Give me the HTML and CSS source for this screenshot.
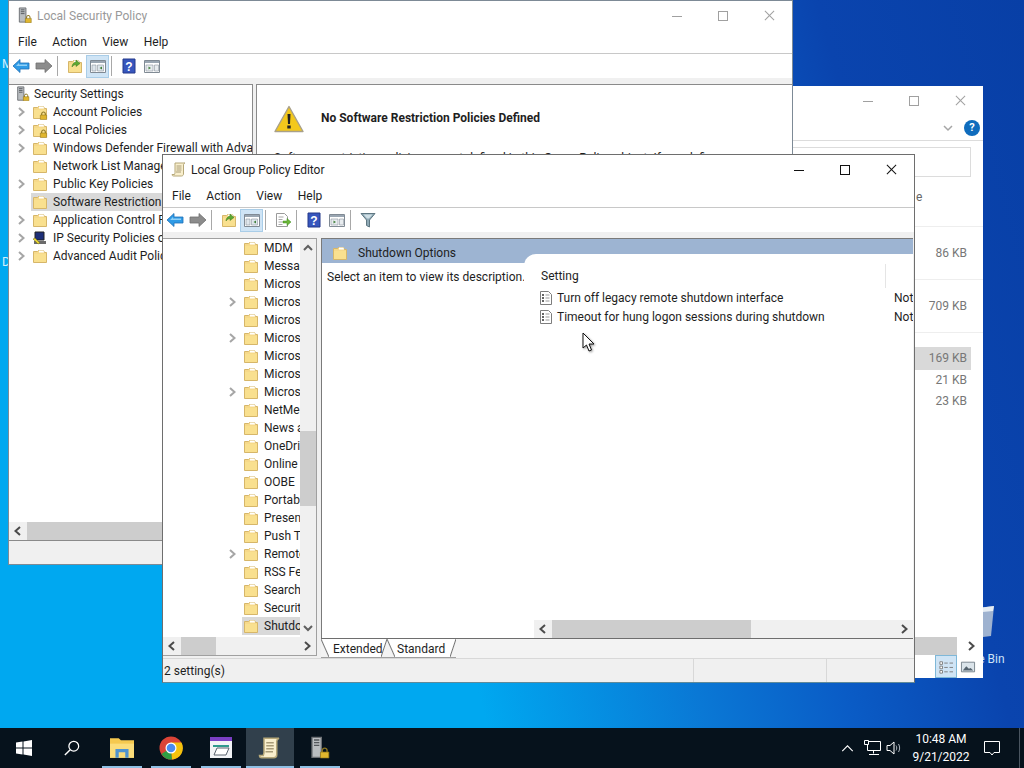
FILE: index.html
```html
<!DOCTYPE html>
<html lang="en">
  <head>
    <meta charset="UTF-8" />
    <title>Local Group Policy Editor</title>
    <link rel="stylesheet" href="styles.css">
  </head>
  <body>
    <svg class="sprites" aria-hidden="true">
      <symbol id="folder" viewBox="0 0 16 16">
        <path d="M1.500 3.500h4l1-1h5l1 2h2v10h-13z" fill="#f6d98a" stroke="#d6b669"/>
        <path d="M7 2.500h4.500l.5 2H7z" fill="#fff"/>
        <path d="M2 6h12v8H2z" fill="#f9e08f"/>
      </symbol>
      <symbol id="lock" viewBox="0 0 10 10">
        <path d="M3 5V3.200a2 2 0 0 1 4 0V5" fill="none" stroke="#8a7420" stroke-width="1.200"/>
        <path d="M1.500 4.500h7v5h-7z" fill="#e0b62e" stroke="#8f7418" stroke-width=".6"/>
      </symbol>
      <symbol id="chev" viewBox="0 0 12 12">
        <path d="M4 2l4.500 4L4 10" fill="none" stroke="#a6a6a6" stroke-width="2"/>
      </symbol>
      <symbol id="server" viewBox="0 0 16 18">
        <path d="M2 1h7v15H2z" fill="#b9bdc0" stroke="#6c7074"/>
        <path d="M3.500 3h4M3.500 5h4M3.500 7h4" stroke="#54585c"/>
        <use href="#lock" x="7" y="8" width="9" height="9"/>
      </symbol>
      <symbol id="back" viewBox="0 0 18 16">
        <path d="M1 8l7-6.500V5h9v6H8v3.500z" fill="#2f9be6" stroke="#1f6fb5" stroke-width=".8"/>
        <path d="M4 8l3-3v1.500h8V8z" fill="#8fd0f7"/>
      </symbol>
      <symbol id="fwd" viewBox="0 0 18 16">
        <path d="M17 8l-7-6.500V5H1v6h9v3.500z" fill="#8c8c8c" stroke="#6e6e6e" stroke-width=".8"/>
      </symbol>
      <symbol id="up" viewBox="0 0 16 16">
        <use href="#folder" width="16" height="16"/>
        <path d="M5 9c0-3 2-4.500 4-5V2l4 3.500-4 3V6.500c-1.500.3-3 1-4 2.500z" fill="#5ea832" stroke="#3c7a1c" stroke-width=".5"/>
      </symbol>
      <symbol id="pane-l" viewBox="0 0 18 16">
        <path d="M1.500 2.500h15v12h-15z" fill="#fff" stroke="#808a94"/>
        <path d="M2 3h14v2H2z" fill="#9aa6b2"/>
        <path d="M3 7h4v6H3zM8.500 7h6v6h-6z" fill="#dfe6ec" stroke="#8b959e" stroke-width=".6"/>
        <path d="M13 8.500v3l-2.500-1.500z" fill="#3f7f3a"/>
      </symbol>
      <symbol id="pane-r" viewBox="0 0 18 16">
        <path d="M1.500 2.500h15v12h-15z" fill="#fff" stroke="#808a94"/>
        <path d="M2 3h14v2H2z" fill="#9aa6b2"/>
        <path d="M3 7h7v6H3zM11.500 7h4v6h-4z" fill="#e8ecef" stroke="#8b959e" stroke-width=".6"/>
        <path d="M5.500 8.500v3l2.500-1.500z" fill="#3f7f3a"/>
      </symbol>
      <symbol id="help" viewBox="0 0 14 16">
        <path d="M1 1h12v14H1z" fill="#3756bd" stroke="#25398a"/>
        <text x="7" y="12.500" text-anchor="middle" font-family="Liberation Sans" font-weight="700" font-size="12" fill="#fff">?</text>
      </symbol>
      <symbol id="export" viewBox="0 0 18 16">
        <path d="M2.500 1.500h8l3 3v10h-11z" fill="#fff" stroke="#9a9a9a"/>
        <path d="M4.500 5h5M4.500 7.500h4M4.500 10h4M4.500 12.500h4" stroke="#a8a8a8"/>
        <path d="M9 9h4V6.500l4 3.500-4 3.500V11H9z" fill="#6cb63a" stroke="#3f8a1f" stroke-width=".5"/>
      </symbol>
      <symbol id="funnel" viewBox="0 0 16 16">
        <path d="M1 1.500h14L9.500 8v7l-3-1.500V8z" fill="#8fa9b5" stroke="#5f7782"/>
        <path d="M3.500 2.500h9L9 6.500H7z" fill="#cfdfe6"/>
      </symbol>
      <symbol id="script" viewBox="0 0 16 16">
        <path d="M4 1.500h10c-1 .5-1.500 1-1.500 2v9c0 1-.8 2-2 2H2.500c-1 0-1.500-.7-1.500-1.500h2.500c.3-1 .5-1.500.5-2z" fill="#f9efcd" stroke="#b5a778"/>
        <path d="M5.500 4.500h5M5.500 6.500h5M5.500 8.500h5M5 10.500h5" stroke="#a89c78"/>
      </symbol>
      <symbol id="policy" viewBox="0 0 14 16">
        <path d="M1.500 1.500h8l3 3v10h-11z" fill="#fff" stroke="#7d7d7d"/>
        <path d="M3 5h2M3 8h2M3 11h2" stroke="#333" stroke-width="1.400"/>
        <path d="M6.500 5h4M6.500 8h4M6.500 11h4" stroke="#9a9a9a"/>
      </symbol>
    </svg>

    <main class="desktop">
      <span class="desk-label desk-label--m">M</span>
      <span class="desk-label desk-label--d">D</span>
      <div class="recycle">
        <svg class="recycle__bin" viewBox="0 0 30 36">
          <path d="M3 5l24-3-3 30-16 2z" fill="#b9c6d6" opacity=".85"/>
          <path d="M3 5l24-3-1 5-21 2z" fill="#e6edf4"/>
        </svg>
        <span class="recycle__name">Recycle Bin</span>
      </div>

      <!-- file explorer, only its right side shows -->
      <section class="win win--files">
        <div class="files-title">
          <span class="caption caption--min caption--off"></span>
          <span class="caption caption--max caption--off"></span>
          <span class="caption caption--close caption--off"></span>
        </div>
        <div class="files-ribbon">
          <svg class="files-ribbon__chev" viewBox="0 0 12 12"><path d="M2 4l4 4 4-4" fill="none" stroke="#a6a6a6" stroke-width="1.500"/></svg>
          <span class="files-help">?</span>
        </div>
        <div class="files-search"></div>
        <div class="files-head">e</div>
        <div class="file-row file-row--tall">86 KB</div>
        <div class="file-row file-row--tall">709 KB</div>
        <div class="file-row file-row--tall file-row--last">
          <span class="file-row__size file-row__size--sel">169 KB</span>
        </div>
        <div class="file-row file-row--small">21 KB</div>
        <div class="file-row file-row--small">23 KB</div>
        <div class="files-spacer"></div>
        <div class="sb-h sb-h--files">
          <span class="sb-h__track sb-h__track--files"></span>
          <svg class="sb-arrow sb-arrow--dark" viewBox="0 0 12 12"><use href="#chev"/></svg>
        </div>
        <div class="files-status">
          <span class="view-btn view-btn--on">
            <svg viewBox="0 0 18 16"><path d="M2 2h3v3H2zM2 7h3v3H2zM2 12h3v3H2z" fill="#fff" stroke="#777"/><path d="M7 3.500h4M13 3.500h4M7 8.500h4M13 8.500h4M7 13.500h4M13 13.500h4" stroke="#777"/></svg>
          </span>
          <span class="view-btn">
            <svg viewBox="0 0 18 16"><path d="M1.500 2.500h15v11h-15z" fill="#dbe4ea" stroke="#6f7b85"/><path d="M3 12l4-5 3 3 2-1 3 3z" fill="#55636e"/></svg>
          </span>
        </div>
      </section>

      <!-- local security policy, behind the editor -->
      <section class="win win--lsp">
        <header class="titlebar titlebar--off">
          <svg class="titlebar__icon" viewBox="0 0 16 18"><use href="#server"/></svg>
          <span class="titlebar__text">Local Security Policy</span>
          <span class="caption caption--min caption--off"></span>
          <span class="caption caption--max caption--off"></span>
          <span class="caption caption--close caption--off"></span>
        </header>
        <nav class="menubar">
          <span>File</span><span>Action</span><span>View</span><span>Help</span>
        </nav>
        <div class="toolbar">
          <span class="tb-btn"><svg viewBox="0 0 18 16"><use href="#back"/></svg></span>
          <span class="tb-btn"><svg viewBox="0 0 18 16"><use href="#fwd"/></svg></span>
          <span class="tb-sep"></span>
          <span class="tb-btn"><svg viewBox="0 0 16 16"><use href="#up"/></svg></span>
          <span class="tb-btn tb-btn--on"><svg viewBox="0 0 18 16"><use href="#pane-l"/></svg></span>
          <span class="tb-sep"></span>
          <span class="tb-btn"><svg viewBox="0 0 14 16"><use href="#help"/></svg></span>
          <span class="tb-btn"><svg viewBox="0 0 18 16"><use href="#pane-r"/></svg></span>
        </div>
        <div class="lsp-body">
          <div class="lsp-tree">
            <div class="lsp-tree__list">
              <div class="tree-root">
                <svg class="tree-icon" viewBox="0 0 16 18"><use href="#server"/></svg>
                <span>Security Settings</span>
              </div>
              <div class="tree-row"><svg class="tree-arrow" viewBox="0 0 12 12"><use href="#chev"/></svg><div class="tree-item"><svg class="tree-icon" viewBox="0 0 16 16"><use href="#folder"/><use href="#lock" x="7" y="7" width="9" height="9"/></svg><span class="tree-label">Account Policies</span></div></div>
              <div class="tree-row"><svg class="tree-arrow" viewBox="0 0 12 12"><use href="#chev"/></svg><div class="tree-item"><svg class="tree-icon" viewBox="0 0 16 16"><use href="#folder"/><use href="#lock" x="7" y="7" width="9" height="9"/></svg><span class="tree-label">Local Policies</span></div></div>
              <div class="tree-row"><svg class="tree-arrow" viewBox="0 0 12 12"><use href="#chev"/></svg><div class="tree-item"><svg class="tree-icon" viewBox="0 0 16 16"><use href="#folder"/></svg><span class="tree-label">Windows Defender Firewall with Advanced Security</span></div></div>
              <div class="tree-row"><span class="tree-arrow"></span><div class="tree-item"><svg class="tree-icon" viewBox="0 0 16 16"><use href="#folder"/></svg><span class="tree-label">Network List Manager Policies</span></div></div>
              <div class="tree-row"><svg class="tree-arrow" viewBox="0 0 12 12"><use href="#chev"/></svg><div class="tree-item"><svg class="tree-icon" viewBox="0 0 16 16"><use href="#folder"/></svg><span class="tree-label">Public Key Policies</span></div></div>
              <div class="tree-row"><span class="tree-arrow"></span><div class="tree-item tree-item--sel"><svg class="tree-icon" viewBox="0 0 16 16"><use href="#folder"/></svg><span class="tree-label">Software Restriction Policies</span></div></div>
              <div class="tree-row"><svg class="tree-arrow" viewBox="0 0 12 12"><use href="#chev"/></svg><div class="tree-item"><svg class="tree-icon" viewBox="0 0 16 16"><use href="#folder"/></svg><span class="tree-label">Application Control Policies</span></div></div>
              <div class="tree-row"><svg class="tree-arrow" viewBox="0 0 12 12"><use href="#chev"/></svg><div class="tree-item"><svg class="tree-icon" viewBox="0 0 16 16"><path d="M3 2h9v8H3z" fill="#1e2f78" stroke="#222"/><path d="M2 11h12v3H2z" fill="#6b6b6b"/><path d="M1 9l5 5 2-1-5-5z" fill="#e8d335" stroke="#6a6a20" stroke-width=".5"/></svg><span class="tree-label">IP Security Policies on Local Computer</span></div></div>
              <div class="tree-row"><svg class="tree-arrow" viewBox="0 0 12 12"><use href="#chev"/></svg><div class="tree-item"><svg class="tree-icon" viewBox="0 0 16 16"><use href="#folder"/></svg><span class="tree-label">Advanced Audit Policy Configuration</span></div></div>
            </div>
            <div class="sb-h">
              <svg class="sb-arrow sb-arrow--left sb-arrow--dark" viewBox="0 0 12 12"><use href="#chev"/></svg>
              <span class="sb-h__track sb-h__track--lsp"></span>
            </div>
          </div>
          <div class="lsp-detail">
            <div class="lsp-notice">
              <svg class="lsp-notice__icon" viewBox="0 0 30 28">
                <path d="M15 1.500l14 25H1z" fill="#f3c81c" stroke="#a8a08a" stroke-width="1.400" stroke-linejoin="round"/>
                <path d="M13.500 9h3l-.5 10h-2z" fill="#222"/><path d="M13.300 20.500h3.400v3h-3.400z" fill="#222"/>
              </svg>
              <strong class="lsp-notice__title">No Software Restriction Policies Defined</strong>
            </div>
            <p class="lsp-text">Software restriction policies are not defined in this Group Policy object. If you define</p>
          </div>
        </div>
        <footer class="lsp-status"></footer>
      </section>

      <!-- local group policy editor, the active window -->
      <section class="win win--gpe">
        <header class="titlebar">
          <svg class="titlebar__icon" viewBox="0 0 16 16"><use href="#script"/></svg>
          <span class="titlebar__text">Local Group Policy Editor</span>
          <span class="caption caption--min"></span>
          <span class="caption caption--max"></span>
          <span class="caption caption--close"></span>
        </header>
        <nav class="menubar">
          <span>File</span><span>Action</span><span>View</span><span>Help</span>
        </nav>
        <div class="toolbar">
          <span class="tb-btn"><svg viewBox="0 0 18 16"><use href="#back"/></svg></span>
          <span class="tb-btn"><svg viewBox="0 0 18 16"><use href="#fwd"/></svg></span>
          <span class="tb-sep"></span>
          <span class="tb-btn"><svg viewBox="0 0 16 16"><use href="#up"/></svg></span>
          <span class="tb-btn tb-btn--on"><svg viewBox="0 0 18 16"><use href="#pane-l"/></svg></span>
          <span class="tb-sep"></span>
          <span class="tb-btn"><svg viewBox="0 0 18 16"><use href="#export"/></svg></span>
          <span class="tb-sep"></span>
          <span class="tb-btn"><svg viewBox="0 0 14 16"><use href="#help"/></svg></span>
          <span class="tb-btn"><svg viewBox="0 0 18 16"><use href="#pane-r"/></svg></span>
          <span class="tb-sep"></span>
          <span class="tb-btn"><svg viewBox="0 0 16 16"><use href="#funnel"/></svg></span>
        </div>
        <div class="gpe-body">
          <div class="gpe-tree">
            <div class="gpe-tree__list">
              <div class="tree-row tree-row--deep"><span class="tree-arrow"></span><div class="tree-item"><svg class="tree-icon" viewBox="0 0 16 16"><use href="#folder"/></svg><span class="tree-label">MDM</span></div></div>
              <div class="tree-row tree-row--deep"><span class="tree-arrow"></span><div class="tree-item"><svg class="tree-icon" viewBox="0 0 16 16"><use href="#folder"/></svg><span class="tree-label">Messaging</span></div></div>
              <div class="tree-row tree-row--deep"><span class="tree-arrow"></span><div class="tree-item"><svg class="tree-icon" viewBox="0 0 16 16"><use href="#folder"/></svg><span class="tree-label">Microsoft account</span></div></div>
              <div class="tree-row tree-row--deep"><svg class="tree-arrow" viewBox="0 0 12 12"><use href="#chev"/></svg><div class="tree-item"><svg class="tree-icon" viewBox="0 0 16 16"><use href="#folder"/></svg><span class="tree-label">Microsoft Defender Antivirus</span></div></div>
              <div class="tree-row tree-row--deep"><span class="tree-arrow"></span><div class="tree-item"><svg class="tree-icon" viewBox="0 0 16 16"><use href="#folder"/></svg><span class="tree-label">Microsoft Defender Application Guard</span></div></div>
              <div class="tree-row tree-row--deep"><svg class="tree-arrow" viewBox="0 0 12 12"><use href="#chev"/></svg><div class="tree-item"><svg class="tree-icon" viewBox="0 0 16 16"><use href="#folder"/></svg><span class="tree-label">Microsoft Defender Exploit Guard</span></div></div>
              <div class="tree-row tree-row--deep"><span class="tree-arrow"></span><div class="tree-item"><svg class="tree-icon" viewBox="0 0 16 16"><use href="#folder"/></svg><span class="tree-label">Microsoft Edge</span></div></div>
              <div class="tree-row tree-row--deep"><span class="tree-arrow"></span><div class="tree-item"><svg class="tree-icon" viewBox="0 0 16 16"><use href="#folder"/></svg><span class="tree-label">Microsoft Secondary Authentication</span></div></div>
              <div class="tree-row tree-row--deep"><svg class="tree-arrow" viewBox="0 0 12 12"><use href="#chev"/></svg><div class="tree-item"><svg class="tree-icon" viewBox="0 0 16 16"><use href="#folder"/></svg><span class="tree-label">Microsoft User Experience</span></div></div>
              <div class="tree-row tree-row--deep"><span class="tree-arrow"></span><div class="tree-item"><svg class="tree-icon" viewBox="0 0 16 16"><use href="#folder"/></svg><span class="tree-label">NetMeeting</span></div></div>
              <div class="tree-row tree-row--deep"><span class="tree-arrow"></span><div class="tree-item"><svg class="tree-icon" viewBox="0 0 16 16"><use href="#folder"/></svg><span class="tree-label">News and interests</span></div></div>
              <div class="tree-row tree-row--deep"><span class="tree-arrow"></span><div class="tree-item"><svg class="tree-icon" viewBox="0 0 16 16"><use href="#folder"/></svg><span class="tree-label">OneDrive</span></div></div>
              <div class="tree-row tree-row--deep"><span class="tree-arrow"></span><div class="tree-item"><svg class="tree-icon" viewBox="0 0 16 16"><use href="#folder"/></svg><span class="tree-label">Online Assistance</span></div></div>
              <div class="tree-row tree-row--deep"><span class="tree-arrow"></span><div class="tree-item"><svg class="tree-icon" viewBox="0 0 16 16"><use href="#folder"/></svg><span class="tree-label">OOBE</span></div></div>
              <div class="tree-row tree-row--deep"><span class="tree-arrow"></span><div class="tree-item"><svg class="tree-icon" viewBox="0 0 16 16"><use href="#folder"/></svg><span class="tree-label">Portable Operating System</span></div></div>
              <div class="tree-row tree-row--deep"><span class="tree-arrow"></span><div class="tree-item"><svg class="tree-icon" viewBox="0 0 16 16"><use href="#folder"/></svg><span class="tree-label">Presentation Settings</span></div></div>
              <div class="tree-row tree-row--deep"><span class="tree-arrow"></span><div class="tree-item"><svg class="tree-icon" viewBox="0 0 16 16"><use href="#folder"/></svg><span class="tree-label">Push To Install</span></div></div>
              <div class="tree-row tree-row--deep"><svg class="tree-arrow" viewBox="0 0 12 12"><use href="#chev"/></svg><div class="tree-item"><svg class="tree-icon" viewBox="0 0 16 16"><use href="#folder"/></svg><span class="tree-label">Remote Desktop Services</span></div></div>
              <div class="tree-row tree-row--deep"><span class="tree-arrow"></span><div class="tree-item"><svg class="tree-icon" viewBox="0 0 16 16"><use href="#folder"/></svg><span class="tree-label">RSS Feeds</span></div></div>
              <div class="tree-row tree-row--deep"><span class="tree-arrow"></span><div class="tree-item"><svg class="tree-icon" viewBox="0 0 16 16"><use href="#folder"/></svg><span class="tree-label">Search</span></div></div>
              <div class="tree-row tree-row--deep"><span class="tree-arrow"></span><div class="tree-item"><svg class="tree-icon" viewBox="0 0 16 16"><use href="#folder"/></svg><span class="tree-label">Security Center</span></div></div>
              <div class="tree-row tree-row--deep"><span class="tree-arrow"></span><div class="tree-item tree-item--sel"><svg class="tree-icon" viewBox="0 0 16 16"><use href="#folder"/></svg><span class="tree-label">Shutdown Options</span></div></div>
              <div class="tree-row tree-row--deep"><span class="tree-arrow"></span><div class="tree-item"><svg class="tree-icon" viewBox="0 0 16 16"><use href="#folder"/></svg><span class="tree-label">Sound Recorder</span></div></div>
            </div>
            <div class="sb-v">
              <svg class="sb-v__arrow" viewBox="0 0 12 12"><path d="M2 8l4-4 4 4" fill="none" stroke="#606060" stroke-width="2"/></svg>
              <span class="sb-v__thumb"></span>
              <svg class="sb-v__arrow sb-v__arrow--end" viewBox="0 0 12 12"><path d="M2 4l4 4 4-4" fill="none" stroke="#606060" stroke-width="2"/></svg>
            </div>
            <div class="sb-h sb-h--tree">
              <svg class="sb-arrow sb-arrow--left sb-arrow--dark" viewBox="0 0 12 12"><use href="#chev"/></svg>
              <span class="sb-h__track sb-h__track--tree"></span>
              <svg class="sb-arrow sb-arrow--dark" viewBox="0 0 12 12"><use href="#chev"/></svg>
            </div>
          </div>
          <div class="gpe-main">
            <div class="gpe-panel">
              <div class="gpe-head">
                <svg class="tree-icon" viewBox="0 0 16 16"><use href="#folder"/></svg>
                <span class="gpe-head__text">Shutdown Options</span>
              </div>
              <div class="gpe-split">
                <p class="gpe-desc">Select an item to view its description.</p>
                <div class="gpe-list">
                  <div class="list-head"><span class="list-head__name">Setting</span><span class="list-head__state"></span></div>
                  <div class="list-row"><svg class="list-row__icon" viewBox="0 0 14 16"><use href="#policy"/></svg><span class="list-row__name">Turn off legacy remote shutdown interface</span><span class="list-row__state">Not configured</span></div>
                  <div class="list-row"><svg class="list-row__icon" viewBox="0 0 14 16"><use href="#policy"/></svg><span class="list-row__name">Timeout for hung logon sessions during shutdown</span><span class="list-row__state">Not configured</span></div>
                  <div class="sb-h sb-h--list">
                    <svg class="sb-arrow sb-arrow--left sb-arrow--dark" viewBox="0 0 12 12"><use href="#chev"/></svg>
                    <span class="sb-h__track sb-h__track--list"></span>
                    <svg class="sb-arrow sb-arrow--dark" viewBox="0 0 12 12"><use href="#chev"/></svg>
                  </div>
                </div>
              </div>
            </div>
            <div class="tabs">
              <span class="tab tab--ext">Extended</span>
              <span class="tab tab--std">Standard</span>
            </div>
          </div>
        </div>
        <footer class="gpe-status">
          <span class="gpe-status__text">2 setting(s)</span>
          <span class="gpe-status__cell gpe-status__cell--wide"></span>
          <span class="gpe-status__cell"></span>
        </footer>
      </section>

      <svg class="pointer" viewBox="0 0 14 21">
        <path d="M1 1v15l3.500-3 2.500 6 2.500-1-2.500-6h5z" fill="#fff" stroke="#111" stroke-width="1"/>
      </svg>
    </main>

    <footer class="taskbar">
      <span class="task task--plain">
        <svg class="task__icon" viewBox="0 0 16 16"><path d="M0 2.500l6.500-.9v6H0zM7.500 1.400L16 0v7.600H7.500zM0 8.500h6.500v6L0 13.600zM7.500 8.500H16V16l-8.500-1.400z" fill="#fff"/></svg>
      </span>
      <span class="task task--plain">
        <svg class="task__icon" viewBox="0 0 18 18"><circle cx="11" cy="7" r="5.500" fill="none" stroke="#fff" stroke-width="1.400"/><path d="M7 11l-6 6" stroke="#fff" stroke-width="1.600"/></svg>
      </span>
      <span class="task task--open">
        <svg class="task__icon task__icon--big" viewBox="0 0 22 22"><path d="M0 2h8l2 2h12v16H0z" fill="#f5c94f"/><path d="M0 7h22v13H0z" fill="#fbdd7a"/><path d="M5 12h12v8h-3v-5H8v5H5z" fill="#4f93cf"/></svg>
      </span>
      <span class="task task--open">
        <svg class="task__icon task__icon--big" viewBox="0 0 24 24">
          <circle cx="12" cy="12" r="11.500" fill="#db4437"/>
          <path d="M12 12L2.500 18A11.500 11.500 0 0 0 13 23.500z" fill="#2f9e44"/>
          <path d="M12 6.500h10.500A11.500 11.500 0 0 1 13 23.500z" fill="#f4c20d"/>
          <circle cx="12" cy="12" r="5.500" fill="#fff"/><circle cx="12" cy="12" r="4.300" fill="#4a8bf0"/>
        </svg>
      </span>
      <span class="task task--open">
        <svg class="task__icon task__icon--big" viewBox="0 0 24 24">
          <path d="M1 1h22v21H1z" fill="#f1f3f6"/><path d="M1 1h22v4H1z" fill="#7a3fc4"/>
          <path d="M4 9h16v2H4z" fill="#2f9a8e"/><path d="M8 12h12l-3 7H5z" fill="#fff" stroke="#59636e"/>
        </svg>
      </span>
      <span class="task task--open task--active">
        <svg class="task__icon task__icon--big" viewBox="0 0 16 16"><use href="#script"/></svg>
      </span>
      <span class="task task--open">
        <svg class="task__icon task__icon--big" viewBox="0 0 16 18"><use href="#server"/></svg>
      </span>
      <div class="tray">
        <svg class="tray__icon tray__icon--chev" viewBox="0 0 14 8"><path d="M1 7l6-6 6 6" fill="none" stroke="#fff" stroke-width="1.300"/></svg>
        <svg class="tray__icon tray__icon--net" viewBox="0 0 17 16"><path d="M3.500 1.500h13v9h-13zM9.500 10.500v3M5 14.500h10" fill="none" stroke="#fff"/><path d="M.5.500h4v4h-4z" fill="#071420" stroke="#fff"/></svg>
        <svg class="tray__icon tray__icon--vol" viewBox="0 0 16 16"><path d="M1 5.500h3l4-3.500v12l-4-3.500H1z" fill="none" stroke="#fff"/><path d="M10 5.500c1 1.500 1 3.500 0 5M12.500 4c1.500 2.500 1.500 5.500 0 8" fill="none" stroke="#aab2ba"/></svg>
        <div class="clock"><span>10:48 AM</span><span>9/21/2022</span></div>
        <svg class="tray__icon tray__icon--note" viewBox="0 0 16 15"><path d="M.5.500h15v11H10l-2 2.500-2-2.500H.5z" fill="none" stroke="#fff"/></svg>
        <span class="show-desktop"></span>
      </div>
    </footer>
  </body>
</html>
```

FILE: styles.css
```css
html,
body {
  height: 100%;
  margin: 0;
  overflow: hidden;
}
body {
  display: flex;
  flex-direction: column;
  font-family: Roboto, "Noto Sans", sans-serif;
  font-size: 12px;
  color: #1e1e1e;
  background: #06121c;
}
.sprites {
  position: absolute;
  width: 0;
  height: 0;
}
svg {
  display: block;
  flex: none;
}

/* desktop */
.desktop {
  position: relative;
  flex: 1 1 auto;
  overflow: hidden;
  background:
    linear-gradient(75deg, #00a8f0 0%, #00a8f0 40%, #0a78d5 58%, #0a5cc6 70%, #0a44ae 83%, #083fa6 100%);
}
.desk-label {
  position: absolute;
  left: 2px;
  color: #d5eefb;
}
.desk-label--m { top: 57px; }
.desk-label--d { top: 255px; }
.recycle {
  position: absolute;
  left: 937px;
  top: 600px;
  width: 74px;
  text-align: center;
  color: #cfe3f7;
}
.recycle__bin {
  margin: 4px 0 0 30px;
  width: 30px;
  height: 36px;
}
.recycle__name {
  display: block;
  margin-top: 12px;
  white-space: nowrap;
}
.pointer {
  position: absolute;
  left: 582px;
  top: 332px;
  width: 14px;
  height: 21px;
  filter: drop-shadow(1px 1px 1px #0006);
}

/* windows */
.win {
  position: absolute;
  display: flex;
  flex-direction: column;
  box-sizing: border-box;
  background: #f0f0f0;
  border: 1px solid #7d8a96;
}
.win--lsp {
  left: 8px;
  top: 0;
  width: 785px;
  height: 565px;
}
.win--gpe {
  left: 162px;
  top: 154px;
  width: 753px;
  height: 529px;
  border-color: #6e6e6e;
  border-bottom-color: #5f8a9a;
}
.win--files {
  left: 600px;
  top: 86px;
  width: 383px;
  height: 592px;
  background: #fff;
  border: 0;
}
.titlebar {
  flex: 0 0 29px;
  display: flex;
  align-items: center;
  background: #fff;
  padding-left: 8px;
  color: #1e1e1e;
}
.titlebar--off {
  color: #999;
}
.titlebar__icon {
  width: 16px;
  height: 17px;
  margin-right: 4px;
}
.titlebar__text {
  flex: 1 1 auto;
}
.caption {
  position: relative;
  flex: 0 0 46px;
  height: 29px;
}
.caption::before,
.caption::after {
  content: "";
  position: absolute;
}
.caption--min::before {
  left: 18px;
  top: 15px;
  width: 10px;
  border-top: 1px solid #111;
}
.caption--max::before {
  left: 18px;
  top: 10px;
  width: 8px;
  height: 8px;
  border: 1.500px solid #111;
}
.caption--close::before,
.caption--close::after {
  left: 17px;
  top: 14px;
  width: 13px;
  border-top: 1px solid #111;
  transform: rotate(45deg);
}
.caption--close::after {
  transform: rotate(-45deg);
}
.caption--off::before,
.caption--off::after {
  border-color: #a0a0a0;
}
.menubar {
  flex: 0 0 24px;
  display: flex;
  align-items: center;
  gap: 15.500px;
  box-sizing: border-box;
  padding-left: 9px;
  background: #fff;
  border-bottom: 1px solid #c8c8c8;
}
.toolbar {
  flex: 0 0 24px;
  display: flex;
  align-items: center;
  background: #fff;
}
.tb-btn {
  display: flex;
  flex: 0 0 23px;
  height: 23px;
  box-sizing: border-box;
  align-items: center;
  justify-content: center;
}
.tb-btn svg {
  width: 18px;
  height: 16px;
}
.tb-btn--on {
  background: #cfe4f5;
  border: 1px solid #a9cde8;
}
.tb-sep {
  flex: 0 0 1px;
  height: 20px;
  margin: 0 5px 0 2px;
  background: #a8a8a8;
}

/* tree */
.tree-root {
  display: flex;
  align-items: center;
  height: 18px;
  padding-left: 6px;
  gap: 3px;
}
.tree-row {
  display: flex;
  align-items: center;
  height: 18px;
  padding-left: 6px;
}
.tree-row--deep {
  padding-left: 63px;
}
.tree-arrow {
  flex: 0 0 12px;
  width: 12px;
  height: 12px;
  margin-right: 4px;
}
.tree-item {
  display: flex;
  align-items: center;
  height: 18px;
  min-width: 0;
  padding-left: 1px;
  gap: 5px;
}
.tree-item--sel {
  background: #d9d9d9;
}
.tree-icon {
  width: 16px;
  height: 16px;
}
.tree-label {
  white-space: nowrap;
}

/* scrollbars */
.sb-h {
  display: flex;
  align-items: center;
  height: 18px;
  flex: none;
  background: #f0f0f0;
}
.sb-arrow {
  flex: 0 0 12px;
  width: 12px;
  height: 12px;
  margin: 0 3px;
}
.sb-arrow--left {
  transform: scaleX(-1);
}
.sb-arrow--dark {
  filter: brightness(.45);
}
.sb-h__track {
  flex: 1 1 auto;
  height: 18px;
  background-repeat: no-repeat;
}
.sb-h__track--lsp {
  background-image: linear-gradient(#cdcdcd, #cdcdcd);
  background-size: 135px 18px;
}
.sb-h__track--tree {
  background-image: linear-gradient(#cdcdcd, #cdcdcd);
  background-size: 35px 18px;
}
.sb-h__track--list {
  background-image: linear-gradient(#cdcdcd, #cdcdcd);
  background-size: 199px 18px;
}
.sb-h__track--files {
  background: #cdcdcd;
}

/* local security policy */
.lsp-body {
  flex: 1 1 auto;
  display: flex;
  min-height: 0;
  gap: 3px;
  padding-top: 6px;
}
.lsp-tree {
  flex: 0 0 244px;
  min-width: 0;
  display: flex;
  flex-direction: column;
  box-sizing: border-box;
  background: #fff;
  border: 1px solid #8a8a8a;
  border-left: 0;
}
.lsp-tree__list {
  flex: 1 1 auto;
  overflow: hidden;
  min-height: 0;
}
.lsp-detail {
  flex: 1 1 auto;
  min-width: 0;
  overflow: hidden;
  padding: 20px 17px;
  background: #fff;
  border: 1px solid #8a8a8a;
  border-right: 0;
}
.lsp-notice {
  display: flex;
  align-items: center;
  gap: 17px;
}
.lsp-notice__icon {
  width: 30px;
  height: 28px;
}
.lsp-notice__title {
  margin-bottom: 2px;
  font-size: 12px;
}
.lsp-text {
  margin: 18px 0 0;
  white-space: nowrap;
}
.lsp-status {
  flex: 0 0 23px;
}

/* group policy editor */
.gpe-body {
  flex: 1 1 auto;
  display: flex;
  min-height: 0;
  padding-top: 6px;
  gap: 4px;
}
.gpe-tree {
  flex: 0 0 154px;
  display: grid;
  grid-template-columns: 137px 16px;
  grid-template-rows: minmax(0, 1fr) 18px;
  box-sizing: border-box;
  margin-bottom: 2px;
  background: #fff;
  border: 1px solid #a0a0a0;
  border-left: 0;
  min-height: 0;
}
.gpe-tree__list {
  overflow: hidden;
  min-height: 0;
}
.sb-v {
  display: flex;
  flex-direction: column;
  align-items: center;
  background: #f0f0f0;
  padding: 3px 0;
}
.sb-v__arrow {
  width: 12px;
  height: 12px;
}
.sb-v__arrow--end {
  margin-top: auto;
}
.sb-v__thumb {
  align-self: stretch;
  height: 75px;
  margin-top: 177px;
  background: #cdcdcd;
}
.sb-h--tree {
  grid-column: 1 / 3;
}
.gpe-main {
  flex: 1 1 auto;
  min-width: 0;
  display: flex;
  flex-direction: column;
}
.gpe-panel {
  flex: 1 1 auto;
  display: flex;
  flex-direction: column;
  min-height: 0;
  background: #fff;
  border: 1px solid #7a7a7a;
  border-right: 0;
  border-bottom: 0;
  margin-right: 1px;
}
.gpe-head {
  flex: 0 0 24px;
  display: flex;
  align-items: center;
  box-sizing: border-box;
  padding: 3px 0 0 10px;
  background: #9db4d2;
}
.gpe-head__text {
  margin-left: 10px;
}
.gpe-split {
  flex: 1 1 auto;
  display: flex;
  min-height: 0;
}
.gpe-desc {
  flex: 0 0 202px;
  min-width: 0;
  box-sizing: border-box;
  margin: 0;
  padding: 7px 0 0 5px;
  white-space: nowrap;
}
.gpe-list {
  flex: 1 1 auto;
  display: flex;
  flex-direction: column;
  min-width: 0;
  margin-top: -9px;
  padding-left: 15px;
  background: #fff;
  border-top-left-radius: 12px;
  overflow: hidden;
}
.list-head {
  display: flex;
  align-items: center;
  height: 24px;
  margin-top: 10px;
}
.list-head__name {
  flex: 0 0 344px;
  padding-left: 2px;
}
.list-head__state {
  height: 24px;
  border-left: 1px solid #e5e5e5;
}
.list-row {
  display: flex;
  align-items: center;
  height: 19px;
  white-space: nowrap;
}
.list-row__icon {
  width: 14px;
  height: 16px;
}
.list-row__name {
  flex: 0 0 337px;
  margin-left: 4px;
}
.list-row__state {
  flex: none;
}
.sb-h--list {
  margin: auto 0 0 -5px;
}
.tabs {
  flex: 0 0 19px;
  display: flex;
  box-sizing: border-box;
  border-top: 1px solid #6e6e6e;
  margin-right: 1px;
  background: #f3f3f3;
}
.tab {
  display: block;
  box-sizing: border-box;
  padding-top: 2px;
  line-height: 16px;
  background-color: #fff;
  background-repeat: no-repeat;
  background-image:
    linear-gradient(to top right, #f3f3f3 calc(50% - 1px), #777 50%, #fff calc(50% + 1px)),
    linear-gradient(to top left, #f3f3f3 calc(50% - 1px), #777 50%, #fff calc(50% + 1px));
  background-position: left top, right top;
  background-size: 8px 100%, 6px 100%;
  border-bottom: 1px solid #a0a0a0;
}
.tab--ext {
  width: 66px;
  padding-left: 12px;
}
.tab--std {
  width: 69px;
  padding-left: 10px;
}
.gpe-status {
  flex: 0 0 22px;
  display: flex;
  align-items: stretch;
  box-sizing: border-box;
  padding-left: 1px;
  line-height: 21px;
  border-top: 1px solid #d8d8d8;
}
.gpe-status__text {
  margin: 2px auto 0 0;
}
.gpe-status__cell {
  flex: 0 0 87px;
  border-left: 1px solid #d8d8d8;
}
.gpe-status__cell--wide {
  flex-basis: 132px;
}

/* file explorer */
.files-title {
  flex: 0 0 30px;
  display: flex;
  justify-content: flex-end;
}
.files-ribbon {
  flex: 0 0 24px;
  display: flex;
  align-items: center;
  justify-content: flex-end;
  padding-right: 3px;
  gap: 10px;
  border-bottom: 1px solid #dcdcdc;
}
.files-ribbon__chev {
  width: 12px;
  height: 12px;
}
.files-help {
  width: 16px;
  height: 16px;
  border-radius: 50%;
  background: #0f6cbd;
  color: #fff;
  font-weight: 700;
  font-size: 11px;
  line-height: 16px;
  text-align: center;
}
.files-search {
  flex: 0 0 28px;
  margin: 6px 12px 0 0;
  border: 1px solid #dcdcdc;
}
.files-head {
  flex: 0 0 50px;
  padding: 13px 0 0 316px;
  box-sizing: border-box;
  color: #666;
  border-bottom: 1px solid #eee;
}
.file-row {
  display: flex;
  align-items: center;
  justify-content: flex-end;
  padding-right: 16px;
  color: #777;
}
.file-row--tall {
  flex: 0 0 53px;
  box-sizing: border-box;
  border-bottom: 1px solid #eee;
}
.file-row--last {
  border-bottom: 0;
  align-items: flex-end;
  padding-right: 12px;
  flex-basis: 37px;
}
.file-row__size {
  line-height: 23px;
  padding: 0 4px 0 60px;
}
.file-row__size--sel {
  background: #d9d9d9;
}
.file-row--small {
  flex: 0 0 20.500px;
}
.files-spacer {
  flex: 1 1 auto;
}
.sb-h--files {
  background: #fff;
  padding-right: 3px;
}
.sb-h__track--files {
  margin-right: 5px;
}
.files-status {
  flex: 0 0 23px;
  display: flex;
  align-items: center;
  justify-content: flex-end;
  gap: 1px;
  padding-right: 5px;
}
.view-btn {
  display: flex;
  align-items: center;
  justify-content: center;
  width: 20px;
  height: 23px;
}
.view-btn svg {
  width: 16px;
  height: 14px;
}
.view-btn--on {
  width: 22px;
  background: #cfe4f5;
  border: 1px solid #7fb8d8;
  box-sizing: border-box;
}

/* taskbar */
.taskbar {
  flex: 0 0 40px;
  display: flex;
  align-items: center;
  background: #06121c;
  color: #fff;
}
.task {
  position: relative;
  display: flex;
  align-items: center;
  justify-content: center;
  flex: 0 0 48px;
  height: 40px;
}
.task--open {
  margin-left: 1.500px;
}
.task--open::after {
  content: "";
  position: absolute;
  left: 4px;
  right: 4px;
  bottom: 0;
  height: 2px;
  background: #8fc0e4;
}
.task--active {
  background: #31404c;
}
.task--active::after {
  left: 0;
  right: 0;
}
.task__icon {
  width: 16px;
  height: 16px;
}
.task__icon--big {
  width: 24px;
  height: 24px;
}
.tray {
  flex: 1 1 auto;
  display: flex;
  align-items: center;
  justify-content: flex-end;
  height: 40px;
}
.tray__icon--chev {
  width: 13px;
  height: 7px;
  margin-right: 10px;
}
.tray__icon--net {
  width: 17px;
  height: 16px;
  margin-right: 5px;
}
.tray__icon--vol {
  width: 16px;
  height: 16px;
  margin-right: 2px;
}
.clock {
  display: flex;
  flex-direction: column;
  align-items: center;
  width: 74px;
  line-height: 18px;
}
.tray__icon--note {
  width: 16px;
  height: 15px;
  margin: 0 19px 0 6px;
}
.show-desktop {
  width: 1px;
  height: 40px;
  background: #4a5560;
  margin-right: 4px;
}
```
